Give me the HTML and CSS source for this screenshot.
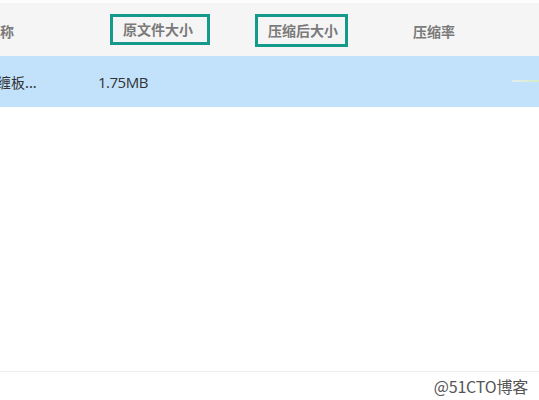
FILE: index.html
```html
<!DOCTYPE html>
<html lang="zh">
<head>
<meta charset="utf-8">
<link rel="stylesheet" href="styles.css">
</head>
<body>
<div class="page">
  <div class="thead">
    <div class="th th-name"><span class="clip">名称</span></div>
    <div class="th"><span class="mark mark-a">原文件大小</span></div>
    <div class="th"><span class="mark mark-b">压缩后大小</span></div>
    <div class="th th-rate">压缩率</div>
  </div>
  <div class="row">
    <div class="td td-name"><span class="clip2">缠板...</span></div>
    <div class="td td-size">1.75MB</div>
    <div class="td"></div>
    <div class="td td-bar"><span class="bar"></span></div>
  </div>
  <div class="spacer"></div>
  <div class="footer"><span class="wm">@51CTO博客</span></div>
</div>
</body>
</html>
```
FILE: styles.css
```css
html, body {
  margin: 0;
  padding: 0;
  background: #fff;
  overflow: hidden;
}
.page {
  width: 539px;
  height: 400px;
  display: flex;
  flex-direction: column;
  font-family: "Noto Sans CJK SC", "Noto Sans", sans-serif;
}
.thead {
  height: 53px;
  border-top: 3px solid #fdfdfd;
  background: #f6f5f5;
  display: grid;
  grid-template-columns: 110px 145px 145px 1fr;
  align-items: start;
  overflow: hidden;
}
.th {
  font-size: 14px;
  font-weight: 700;
  color: #7a7a7a;
  white-space: nowrap;
}
.th-name, .th-rate {
  padding-top: 18px;
  line-height: 20px;
}
.clip {
  display: inline-block;
  margin-left: -14px;
}
.th-rate {
  padding-left: 13px;
}
.mark {
  display: inline-block;
  box-sizing: border-box;
  border: 3px solid #139a8b;
  line-height: 20px;
  margin-top: 11px;
}
.mark-a {
  height: 31px;
  width: 100px;
  padding: 2px 0 0 10px;
}
.mark-b {
  height: 33px;
  width: 93px;
  padding: 3px 0 0 10px;
}
.row {
  height: 51px;
  background: #c2e2fc;
  display: grid;
  grid-template-columns: 98px 157px 145px 1fr;
  align-items: center;
  font-size: 14px;
  color: #333;
  overflow: hidden;
}
.clip2 {
  display: inline-block;
  margin-left: -3px;
}
.td-size {
  font-family: "Open Sans", "Noto Sans", sans-serif;
  font-size: 15px;
  letter-spacing: -0.5px;
}
.td-bar {
  display: flex;
  justify-content: flex-end;
}
.bar {
  display: block;
  width: 27px;
  height: 2px;
  margin-top: -2px;
  background: linear-gradient(to right, #e6ecef, #d4ecc6);
}
.spacer {
  flex: 1;
}
.footer {
  height: 28px;
  border-top: 1px solid #ececec;
  display: flex;
  justify-content: flex-end;
  align-items: center;
  padding-right: 11px;
}
.wm {
  font-size: 16px;
  color: #555;
  letter-spacing: -0.2px;
  text-shadow: 0 0 1px #fff;
}
```
